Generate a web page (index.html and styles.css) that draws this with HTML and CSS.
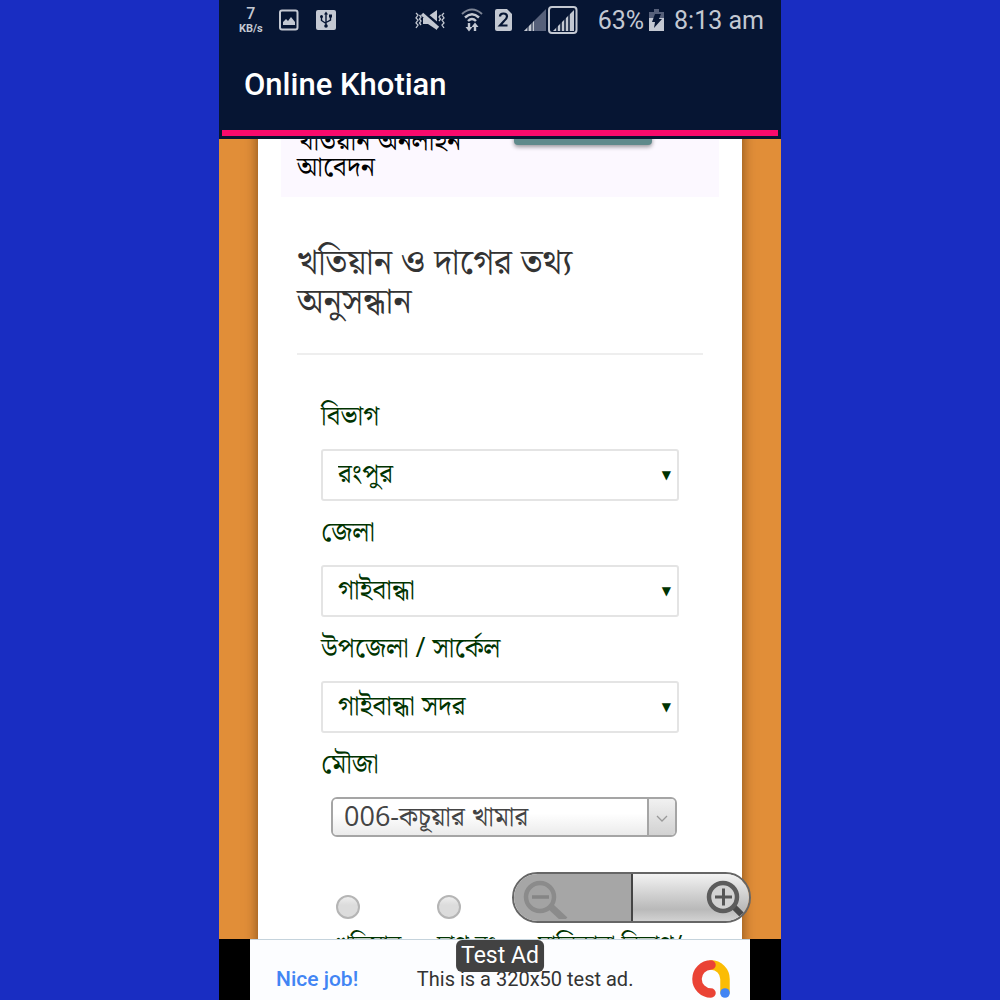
FILE: index.html
```
<!DOCTYPE html>
<html lang="bn">
<head>
    <meta charset="UTF-8">
    <meta name="viewport" content="width=device-width, initial-scale=1.0">
    <title>Online Khotian</title>
    <link rel="stylesheet" href="styles.css">
</head>
<body>
    <div class="phone">
        <header class="app-header">
            <div class="status-bar">
                <div class="status-left">
                    <div class="speed"><b>7</b><span>KB/s</span></div>
                    <svg width="20" height="22" viewBox="0 0 20 22">
                        <rect x="1" y="1.500" width="17.500" height="19" rx="2" fill="none" stroke="#c3c8d2" stroke-width="2"/>
                        <path d="M4 16v-3l3-3 2 2 3-4 4 5v3z" fill="#c3c8d2"/>
                    </svg>
                    <svg width="22" height="22" viewBox="0 0 22 22">
                        <rect x="1" y="1" width="20" height="20" rx="2" fill="#c3c8d2"/>
                        <path d="M11 4v13M6.500 7.500v4l4.500 3M15.500 7v4l-4.500 2.500" fill="none" stroke="#061533" stroke-width="1.400"/>
                        <path d="M11 2.500l2 3h-4z" fill="#061533"/>
                        <circle cx="11" cy="17" r="1.800" fill="#061533"/>
                        <circle cx="6.500" cy="7.500" r="1.500" fill="#061533"/>
                        <rect x="14" y="5.500" width="3" height="3" fill="#061533"/>
                    </svg>
                </div>
                <div class="status-right">
                    <svg width="31" height="22" viewBox="0 0 31 22">
                        <path d="M1 4l2 2-2 3 2 2-2 3 2 2-2 3M4.500 6l1.500 2-1.500 2 1.500 2-1.500 2 1.500 2M29 4l-2 2 2 3-2 2 2 3-2 2 2 3M25.500 6l-1.500 2 1.500 2-1.500 2" fill="none" stroke="#c3c8d2" stroke-width="1.300"/>
                        <path d="M12 8l10-7v20l-9-6H8V9z" fill="#c3c8d2"/>
                        <path d="M7 2l18 15" stroke="#061533" stroke-width="3"/>
                        <path d="M7 5l16 14" stroke="#c3c8d2" stroke-width="3.500"/>
                    </svg>
                    <svg class="wifi" width="22" height="25" viewBox="0 0 22 25">
                        <path d="M1 6Q11-3 21 6" fill="none" stroke="#7d8596" stroke-width="2"/>
                        <path d="M4 9.500Q11 3 18 9.500M7 13Q11 9 15 13" fill="none" stroke="#c3c8d2" stroke-width="2.400"/>
                        <path d="M8 15v5M14 18v5" stroke="#c3c8d2" stroke-width="2.400"/>
                        <path d="M4.500 19h7L8 23.500zM10.500 19h7L14 14.500z" fill="#c3c8d2"/>
                    </svg>
                    <svg class="sim" width="17" height="22" viewBox="0 0 17 22">
                        <path d="M2 0h10l5 5v15q0 2-2 2H2q-2 0-2-2V2q0-2 2-2z" fill="#c3c8d2"/>
                        <path d="M5 7.500q0-3 3.500-3t3.500 3q0 2-3 4.500l-4 4.500h7.500" fill="none" stroke="#061533" stroke-width="2.200"/>
                    </svg>
                    <svg class="signal" width="54" height="29" viewBox="0 0 54 29">
                        <path d="M0 25h22V3z" fill="#56607a"/>
                        <path d="M0 25l10-10v10z" fill="#c3c8d2"/>
                        <path d="M4 19v6M8 15v10" stroke="#061533"/>
                        <rect x="25" y="1" width="27.500" height="26" rx="3" fill="none" stroke="#c3c8d2" stroke-width="2"/>
                        <path d="M29 25h21V4z" fill="#c3c8d2"/>
                        <path d="M33 18v7M37 15v10M41 11v14M45 7v18" stroke="#061533" stroke-width="1.500"/>
                    </svg>
                    <span class="percent">63%</span>
                    <svg class="battery" width="15" height="22" viewBox="0 0 15 22">
                        <path d="M0 3h5V0h5v3h5v7H0z" fill="#56607a"/>
                        <path d="M0 9h15v13H0z" fill="#c3c8d2"/>
                        <path d="M6 5h6l-2 5h3L5 19l1-6H3z" fill="#061533"/>
                    </svg>
                    <span>8:13 am</span>
                </div>
            </div>
            <h1>Online Khotian</h1>
            <div class="progress"></div>
        </header>

        <main class="page">
            <div class="card">
                <section class="apply">
                    <p>খতিয়ান অনলাইন আবেদন</p>
                    <button type="button" class="apply-btn" aria-label="আবেদন"></button>
                </section>

                <h2>খতিয়ান ও দাগের তথ্য<br>অনুসন্ধান</h2>

                <form class="search-form">
                    <label for="division">বিভাগ</label>
                    <div class="select-box">
                        <select id="division"><option>রংপুর</option></select>
                    </div>
                    <label for="district">জেলা</label>
                    <div class="select-box">
                        <select id="district"><option>গাইবান্ধা</option></select>
                    </div>
                    <label for="upazila">উপজেলা / সার্কেল</label>
                    <div class="select-box">
                        <select id="upazila"><option>গাইবান্ধা সদর</option></select>
                    </div>
                    <label for="mouza">মৌজা</label>
                    <div class="combo">
                        <input id="mouza" type="text" value="006-কচূয়ার খামার">
                        <button type="button" aria-label="মৌজা তালিকা">
                            <svg width="12" height="8" viewBox="0 0 12 8"><path d="M1 1l5 5 5-5" fill="none" stroke="#999" stroke-width="1.300"/></svg>
                        </button>
                    </div>
                    <div class="types">
                        <div class="type">
                            <input type="radio" name="type" id="type1">
                            <label for="type1">খতিয়ান</label>
                        </div>
                        <div class="type">
                            <input type="radio" name="type" id="type2">
                            <label for="type2">দাগ নং</label>
                        </div>
                        <div class="type">
                            <input type="radio" name="type" id="type3">
                            <label for="type3">মালিকানা বিভাগ/</label>
                        </div>
                    </div>
                </form>
            </div>

            <div class="zoom">
                <button type="button" class="zoom-out" aria-label="Zoom out" disabled>
                    <svg width="46" height="42" viewBox="0 0 46 42">
                        <path d="M28 29l15 14" stroke="#8b8b8b" stroke-width="7"/>
                        <circle cx="18" cy="20" r="14" fill="#a3a3a3" stroke="#8b8b8b" stroke-width="4.500"/>
                        <path d="M10 20h17" stroke="#858585" stroke-width="3.500"/>
                    </svg>
                </button>
                <button type="button" class="zoom-in" aria-label="Zoom in">
                    <svg width="40" height="42" viewBox="0 0 40 42">
                        <path d="M28 29l12 12" stroke="#4a4a4a" stroke-width="6"/>
                        <circle cx="18" cy="20" r="14" fill="#d2d2d2" stroke="#5c5c5c" stroke-width="4.500"/>
                        <path d="M10 20h17M18.500 11.500v17" stroke="#555" stroke-width="3"/>
                    </svg>
                </button>
            </div>
        </main>

        <footer class="ad-bar">
            <div class="ad">
                <a href="#">Nice job!</a>
                <span class="ad-text">This is a 320x50 test ad.</span>
                <svg width="38" height="38" viewBox="0 0 38 38" fill="none" stroke-linecap="round">
                    <path d="M19 5a14 14 0 0 1 14 14v13" stroke="#fbbc04" stroke-width="9.500"/>
                    <path d="M19 5a14 14 0 1 0 0 28" stroke="#ea4335" stroke-width="9.500"/>
                    <circle cx="33" cy="33" r="4.800" fill="#4285f4"/>
                </svg>
                <span class="ad-badge">Test Ad</span>
            </div>
        </footer>
    </div>
</body>
</html>
```

FILE: styles.css
```
* {
    box-sizing: border-box;
}
body {
    margin: 0;
    background: #192dc2;
    font-family: "Open Sans", "Noto Serif Bengali", "Noto Sans Bengali", sans-serif;
}
button, input, select {
    font: inherit;
    margin: 0;
}
.phone {
    display: flex;
    flex-direction: column;
    max-width: 562px;
    height: 100vh;
    margin: 0 auto;
    overflow: hidden;
}

/* header */
.app-header {
    background: #061533;
    color: white;
    font-family: Roboto, sans-serif;
    padding-bottom: 3px;
}
.status-bar {
    display: flex;
    justify-content: space-between;
    height: 40px;
    padding: 0 17px 0 20px;
    color: #c3c8d2;
}
.status-left, .status-right {
    display: flex;
    align-items: center;
}
.status-left {
    gap: 16px;
}
.speed {
    display: flex;
    flex-direction: column;
    align-items: center;
    font-size: 11px;
    font-weight: bold;
    line-height: 13px;
}
.speed b {
    font-size: 16px;
    font-weight: 500;
    line-height: 16px;
}
.status-right {
    font-size: 25px;
}
.wifi {
    margin-left: 15px;
}
.sim {
    margin: 0 12px;
}
.percent {
    margin-left: 20px;
}
.battery {
    margin: 0 10px 0 5px;
}
h1 {
    margin: 0;
    padding: 0 25px;
    font-size: 31px;
    font-weight: 500;
    line-height: 90px;
}
.progress {
    height: 6px;
    margin: 0 3px;
    background: #f80a6c;
}

/* page */
.page {
    position: relative;
    flex: 1;
    min-height: 0;
    overflow: hidden;
    padding: 0 39px;
    background: #e18e38;
}
.card {
    margin-top: -50px;
    padding: 0 23px 40px;
    background: white;
    box-shadow: 0 0 12px rgba(60, 30, 0, 0.6);
}
.apply {
    display: grid;
    grid-template-columns: 8fr 7fr;
    padding: 16px 16px 18px;
    background: #fcf8ff;
}
.apply p {
    margin: 0;
    padding-top: 22px;
    font-size: 27px;
    line-height: 26px;
}
.apply-btn {
    width: 138px;
    height: 40px;
    border: none;
    border-radius: 4px;
    background: #5f8a8b;
    box-shadow: 0 2px 4px rgba(0, 0, 0, 0.4);
}
h2 {
    margin: 0 16px;
    padding: 44px 0 34px;
    border-bottom: 2px solid #eee;
    color: #333;
    font-size: 35px;
    font-weight: normal;
    line-height: 39px;
}
.search-form {
    padding: 42px 40px 0;
    color: #030;
    font-size: 27px;
}
.search-form > label {
    display: block;
    margin-bottom: 16px;
    line-height: 36px;
}
.select-box {
    position: relative;
    margin-bottom: 12px;
}
.select-box::after {
    content: "▼";
    position: absolute;
    top: 0;
    right: 8px;
    font-family: "DejaVu Sans", sans-serif;
    font-size: 12px;
    line-height: 52px;
    pointer-events: none;
}
.select-box select {
    display: block;
    width: 100%;
    height: 52px;
    padding: 0 15px 6px;
    border: 2px solid #e4e4e4;
    border-radius: 3px;
    appearance: none;
    background: white;
    color: #030;
}
.combo {
    display: flex;
    height: 40px;
    margin: 0 2px 0 10px;
    border: 2px solid #a5a5a5;
    border-radius: 6px;
    overflow: hidden;
}
.combo input {
    flex: 1;
    min-width: 0;
    padding: 3px 11px 0;
    border: none;
    background: linear-gradient(white 40%, #ebebeb);
    color: #444;
}
.combo button {
    display: flex;
    align-items: center;
    justify-content: center;
    width: 28px;
    padding: 4px 0 0;
    border: none;
    border-left: 2px solid #a5a5a5;
    background: linear-gradient(#f1f1f1, #d2d2d2);
}
.types {
    display: flex;
    margin-top: 58px;
    white-space: nowrap;
}
.type {
    flex: 0 0 101px;
    padding-left: 15px;
}
.type input {
    display: block;
    width: 24px;
    height: 24px;
    border: 2px solid #b5b5b5;
    border-radius: 50%;
    appearance: none;
    background: linear-gradient(#eee, #dcdcdc 40%);
}
.type label {
    display: block;
    margin-top: 4px;
    font-size: 24px;
    line-height: 40px;
}

/* zoom buttons */
.zoom {
    position: absolute;
    right: 30px;
    bottom: 16px;
    display: flex;
    width: 239px;
    height: 51px;
    border: 2px solid #666;
    border-radius: 26px;
    overflow: hidden;
}
.zoom button {
    display: flex;
    flex: 1;
    align-items: center;
    padding: 0 8px;
    border: none;
}
.zoom .zoom-out {
    flex: 0 0 119px;
    border-right: 2px solid #444;
    background: #a6a6a6;
}
.zoom .zoom-in {
    justify-content: flex-end;
    padding-right: 4px;
    background: linear-gradient(#f2f2f2, #b9b9b9 75%, #d2d2d2);
}

/* ad */
.ad-bar {
    padding: 0 31px;
    background: black;
    font-family: Roboto, sans-serif;
}
.ad {
    position: relative;
    display: flex;
    align-items: center;
    justify-content: space-between;
    height: 61px;
    padding: 18px 20px 0 26px;
    border-top: 1px solid #c5d3dc;
    background: #fcfdff;
    color: #333;
    font-size: 20px;
}
.ad a {
    color: #4285f4;
    font-size: 21px;
    font-weight: 500;
    text-decoration: none;
}
.ad-badge {
    position: absolute;
    top: 0;
    left: 50%;
    transform: translateX(-50%);
    padding: 0 5px;
    border-radius: 6px;
    background: #424242;
    color: white;
    font-size: 23px;
    line-height: 32px;
    white-space: nowrap;
}
```
